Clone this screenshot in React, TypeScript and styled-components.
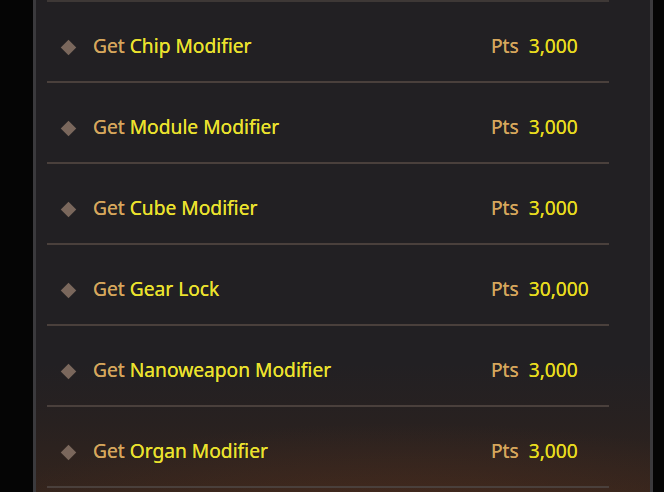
import React from 'react'
import styled, { createGlobalStyle } from 'styled-components'

const GlobalStyle = createGlobalStyle`
  html, body {
    margin: 0;
    padding: 0;
    background: #050505;
  }
  body {
    font-family: "Noto Sans", "Open Sans", sans-serif;
  }
`

const Screen = styled.div`
  width: 664px;
  height: 492px;
  overflow: hidden;
  background: #050505;
  padding-left: 33px;
  box-sizing: border-box;
`

const Panel = styled.div`
  width: 620px;
  height: 492px;
  box-sizing: border-box;
  border-left: 3px solid #3b3a3d;
  border-right: 3px solid #3b3a3d;
  background:
    radial-gradient(ellipse 70% 20% at 60% 106%, rgba(85, 48, 30, 0.55), rgba(70, 38, 22, 0) 100%),
    linear-gradient(180deg, #222023 0%, #222023 74%, #282120 86%, #33241d 100%);
  padding: 0 0 0 11px;
`

const List = styled.ul`
  list-style: none;
  margin: 0;
  padding: 0;
  width: 562px;
  border-top: 2px solid #3e3836;
`

const Row = styled.li`
  border-bottom: 2px solid #4a403c;
  display: flex;
  align-items: center;
  padding: 8px 0 0 16px;
  box-sizing: border-box;
  height: 81px;
  font-size: 19.2px;
  text-shadow: 0 0 0.4px currentColor;
`

const Diamond = styled.span`
  width: 11px;
  height: 11px;
  background: #7a675c;
  transform: rotate(45deg);
  margin: 4px 19px 0 0;
  flex: none;
`

const Label = styled.span`
  flex: 1;
  color: #ebe22e;
  white-space: nowrap;
`

const Muted = styled.span`
  color: #d6a65c;
`

const Price = styled.span`
  width: 118px;
  color: #e8dc1e;
  white-space: nowrap;
`

const items = [
  { name: 'Chip Modifier', pts: '3,000' },
  { name: 'Module Modifier', pts: '3,000' },
  { name: 'Cube Modifier', pts: '3,000' },
  { name: 'Gear Lock', pts: '30,000' },
  { name: 'Nanoweapon Modifier', pts: '3,000' },
  { name: 'Organ Modifier', pts: '3,000' },
]

export default function App() {
  return (
    <>
      <GlobalStyle />
      <Screen>
        <Panel>
          <List>
            {items.map((item) => (
              <Row key={item.name}>
                <Diamond />
                <Label>
                  <Muted>Get</Muted> {item.name}
                </Label>
                <Price>
                  <Muted>Pts</Muted>&nbsp;&nbsp;{item.pts}
                </Price>
              </Row>
            ))}
          </List>
        </Panel>
      </Screen>
    </>
  )
}
